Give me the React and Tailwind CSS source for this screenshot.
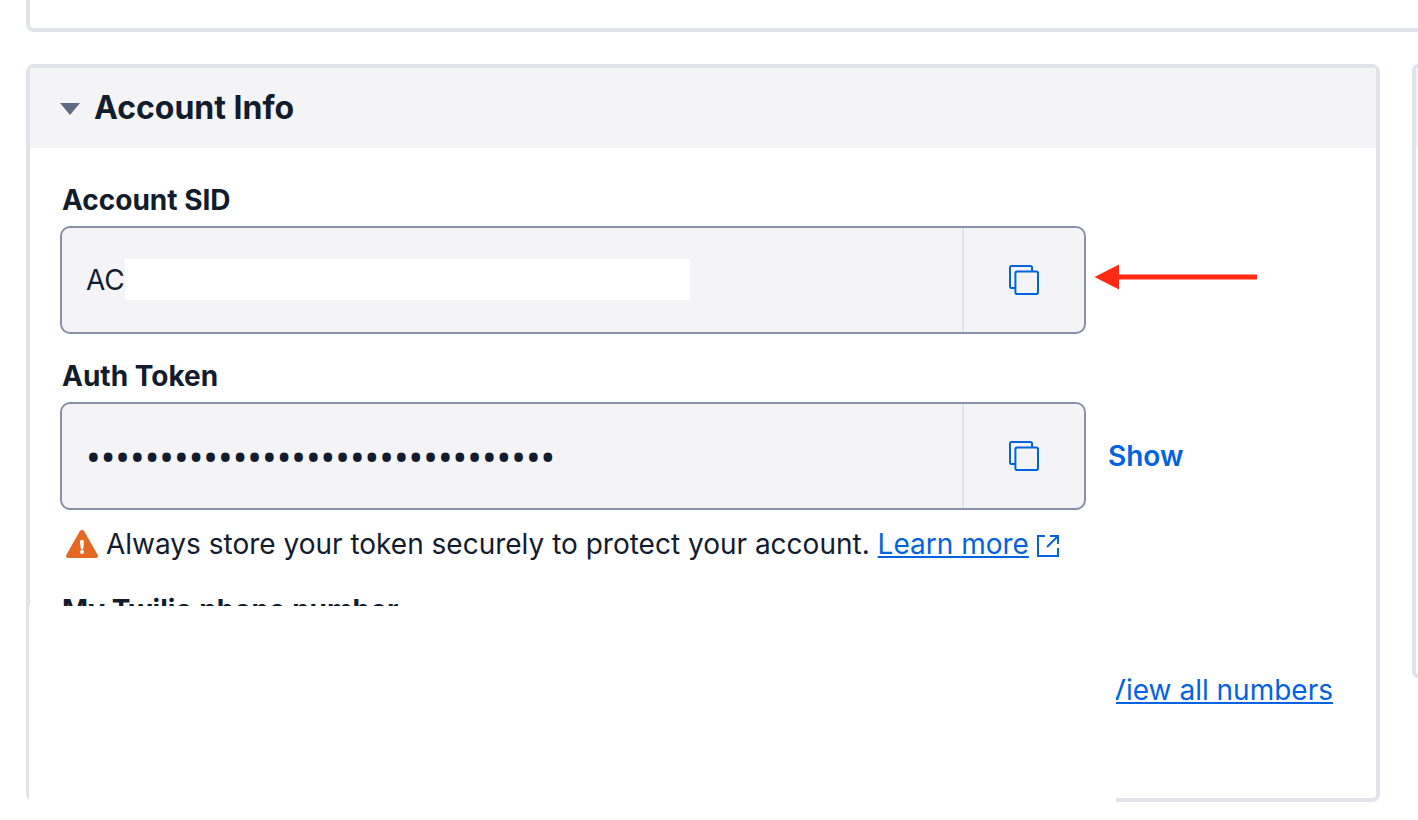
import React, { useState } from 'react';

function CopyIcon() {
    return (
        <svg width="32" height="32" viewBox="0 0 32 32" fill="none" stroke="#0263e0" strokeWidth="2" aria-hidden="true">
            <path d="M7 24H3.500a1.500 1.500 0 0 1-1.500-1.500V3.500a1.500 1.500 0 0 1 1.500-1.500h19a1.500 1.500 0 0 1 1.500 1.500V7" />
            <rect x="7.400" y="7.400" width="22.600" height="22.600" rx="1.800" />
        </svg>
    );
}

function ExternalIcon() {
    return (
        <svg width="24" height="28" viewBox="2 -2 24 28" fill="none" stroke="#0263e0" strokeWidth="2" aria-hidden="true">
            <path d="M10 4H3v20h20v-8M15 4h8v8M23 4L12 15" />
        </svg>
    );
}

function WarningIcon() {
    return (
        <svg width="32" height="28" viewBox="0 0 32 28" aria-hidden="true">
            <path d="M13.6 1.4a2.8 2.8 0 0 1 4.8 0l13.2 23.4a2.1 2.1 0 0 1-1.9 3.200H2.300a2.100 2.100 0 0 1-1.900-3.200z" fill="#e36924" />
            <path d="M14 11.800a2 2 0 0 1 4 0l-.7 6.400a1.300 1.300 0 0 1-2.600 0z" fill="#fff" />
            <circle cx="16" cy="22" r="2" fill="#fff" />
        </svg>
    );
}

function RedArrow() {
    return (
        <svg className="mb-1.5 ml-2" width="164" height="26" viewBox="0 0 164 26" fill="#ff2a14" aria-hidden="true">
            <path d="M0.500 13L25 0.500v10h138v5H25v10z" />
        </svg>
    );
}

function Field({ id, label, type, value, children, aside }) {
    return (
        <div>
            <label htmlFor={id} className="mb-1.5 ml-0.5 block text-[28px] leading-10 font-bold">
                {label}
            </label>
            <div className="flex items-center">
                <div className="relative flex h-[108px] min-w-0 flex-1 overflow-hidden rounded-[10px] border-2 border-[#8891aa] bg-[#f4f4f6]">
                    <input
                        id={id}
                        type={type}
                        value={value}
                        readOnly
                        className={`min-w-0 flex-1 bg-transparent px-6 outline-none ${
                            type === 'password' ? "font-['Noto_Sans',sans-serif] text-[39px]" : 'text-[28px]'
                        }`}
                    />
                    {children}
                    <button
                        aria-label={`Copy ${label}`}
                        className="flex w-[122px] items-center justify-center border-l-2 border-[#e1e3ea]"
                    >
                        <CopyIcon />
                    </button>
                </div>
                <div className="flex w-[260px] items-center">{aside}</div>
            </div>
        </div>
    );
}

export default function App() {
    const [shown, setShown] = useState(false);

    return (
        <div className="overflow-hidden bg-white pl-[26px] font-['Inter',sans-serif] text-[#121c2d]">
            {/* Previous card */}
            <div className="h-8 rounded-bl-lg border-b-4 border-l-4 border-[#e1e3ea]"></div>

            <div className="mt-8 flex items-start gap-8">
                <section className="relative min-w-0 flex-1 rounded-lg border-4 border-[#e1e3ea]">
                    {/* Header */}
                    <h2 className="bg-[#f4f4f6]">
                        <button className="flex h-20 w-full items-center gap-3.5 px-[30px] text-[32px] font-bold">
                            <svg width="20" height="14" viewBox="0 0 20 14" fill="#606b85" aria-hidden="true">
                                <path d="M0 2h20L10 14z" />
                            </svg>
                            Account Info
                        </button>
                    </h2>

                    {/* Body */}
                    <div className="px-[30px] pt-8 pb-[88px]">
                        <div className="flex flex-col gap-[22px]">
                            <Field id="sid" label="Account SID" type="text" value="AC" aside={<RedArrow />}>
                                <div className="absolute top-[31px] left-[63px] h-[41px] w-[565px] bg-white"></div>
                            </Field>
                            <Field
                                id="token"
                                label="Auth Token"
                                type={shown ? 'text' : 'password'}
                                value="00000000000000000000000000000000"
                                aside={
                                    <button
                                        onClick={() => setShown(!shown)}
                                        className="ml-[22px] text-[28px] font-semibold text-[#0263e0]"
                                    >
                                        Show
                                    </button>
                                }
                            />
                        </div>

                        <p className="mt-3.5 ml-1.5 flex items-center gap-2 text-[28px] leading-10">
                            <WarningIcon />
                            <span>
                                Always store your token securely to protect your account.{' '}
                                <a href="#learn" className="text-[#0263e0] underline">Learn more</a>
                            </span>
                            <ExternalIcon />
                        </p>

                        <h3 className="mt-[26px] ml-0.5 text-[28px] leading-10 font-bold">My Twilio phone number</h3>
                        <div className="mt-10 pr-[13px] text-right text-[28px] leading-10">
                            <a href="#numbers" className="text-[#0263e0] underline">View all numbers</a>
                        </div>
                    </div>

                    {/* Redacted area */}
                    <div className="absolute top-[538px] right-[260px] -bottom-1 -left-px bg-white"></div>
                </section>

                {/* Next column */}
                <section className="h-[614px] w-1.5 rounded-l-lg border-4 border-r-0 border-[#e1e3ea]">
                    <div className="h-20 bg-[#f4f4f6]"></div>
                </section>
            </div>
        </div>
    );
}
